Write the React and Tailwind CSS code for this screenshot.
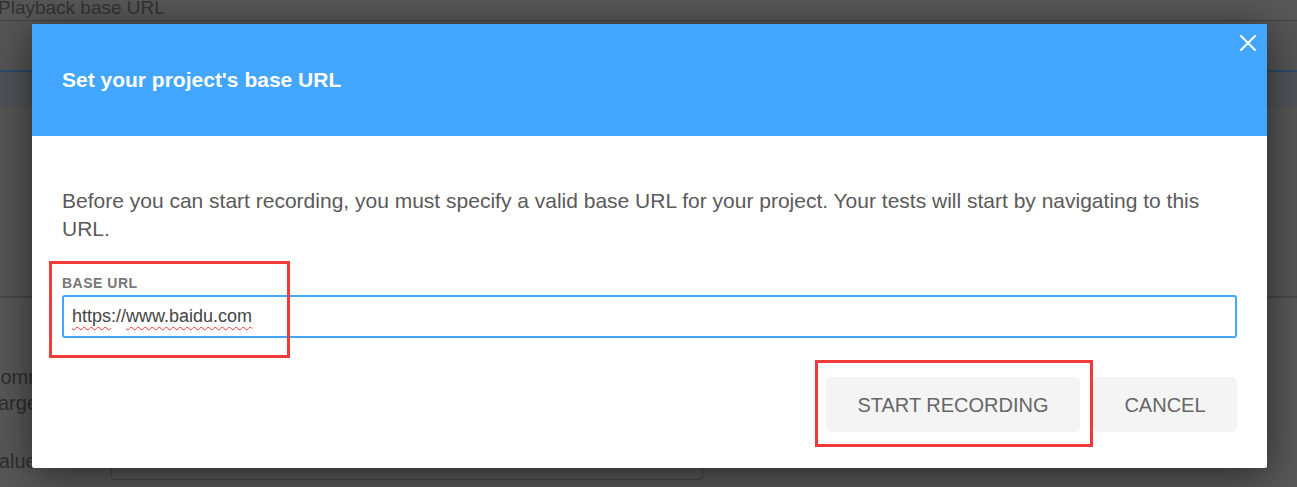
import React from 'react';
import { X } from 'lucide-react';

const font = { fontFamily: '"Liberation Sans", Arial, sans-serif' };

function BackgroundPage() {
  return (
    <div className="flex h-[487px] w-full flex-col bg-[#585858] text-[#333]">
      <div className="h-[21px] border-b border-[#444] text-[19px] leading-[16px] text-[#333]">
        <span className="-ml-[2px]">Playback base URL</span>
      </div>
      <div className="h-[49px] bg-[#555]" />
      <div className="h-[2px] bg-[#2c4c6c]" />
      <div className="h-[35px] bg-[#4f5357]" />
      <div className="h-[191px] border-b-[2px] border-[#484848] bg-[#565656]" />
      <div className="flex flex-col pt-[67px] text-[20px] text-[#2e2e2e]">
        <div className="flex h-[24px] items-center">
          <span className="-ml-[14px]">Comm</span>
        </div>
        <div className="mt-[2px] flex h-[24px] items-center">
          <span className="-ml-[12px]">Target</span>
        </div>
        <div className="mt-[31px] flex h-[34px] items-center">
          <span className="-ml-[13px] -mt-[4px]">Value</span>
          <div className="ml-[74px] h-[34px] w-[592px] rounded border border-[#444]" />
        </div>
      </div>
    </div>
  );
}

export default function App() {
  return (
    <div className="relative h-[487px] w-[1297px] overflow-hidden" style={font}>
      <BackgroundPage />

      <div className="absolute inset-0 flex justify-center pl-[2px]">
        <div className="relative mt-[24px] h-[444px] w-[1235px] rounded-[2px] bg-white shadow-[0_6px_40px_rgba(0,0,0,0.55)]">
          <div className="relative flex h-[112px] items-center bg-[#42a6ff] px-[30px]">
            <h1 className="text-[21px] font-bold text-white">Set your project's base URL</h1>
            <button className="absolute right-[5px] top-[5px] text-white">
              <X size={28} strokeWidth={1.7} />
            </button>
          </div>

          <div className="px-[30px] pt-[51px]">
            <p className="text-[21px] leading-[28px] text-[#5a5a5a]">
              Before you can start recording, you must specify a valid base URL for your project. Your tests will start by navigating to this URL.
            </p>

            <div className="mt-[32px] text-[14px] leading-[16px] font-bold tracking-[0.5px] text-[#777]">BASE URL</div>
            <div className="mt-[4px] flex h-[43px] items-center rounded-[3px] border-2 border-[#42a6ff] px-[8px] text-[18px] text-[#444]">
              <span className="underline decoration-[#e53935] decoration-wavy decoration-1 underline-offset-[4px]">https</span>
              <span>://</span>
              <span className="underline decoration-[#e53935] decoration-wavy decoration-1 underline-offset-[4px]">www.baidu.com</span>
            </div>

            <div className="mt-[39px] flex justify-end gap-[13px]">
              <button className="h-[55px] w-[254px] rounded-[5px] bg-[#f4f4f4] text-[20px] text-[#666]">
                START RECORDING
              </button>
              <button className="h-[55px] w-[144px] rounded-[5px] bg-[#f4f4f4] text-[20px] text-[#666]">
                CANCEL
              </button>
            </div>
          </div>
        </div>
      </div>

      <div className="pointer-events-none absolute left-[49px] top-[261px] h-[97px] w-[241px] border-[3px] border-[#f03a3a]" />
      <div className="pointer-events-none absolute left-[815px] top-[360px] h-[87px] w-[278px] border-[3px] border-[#f03a3a]" />
    </div>
  );
}
